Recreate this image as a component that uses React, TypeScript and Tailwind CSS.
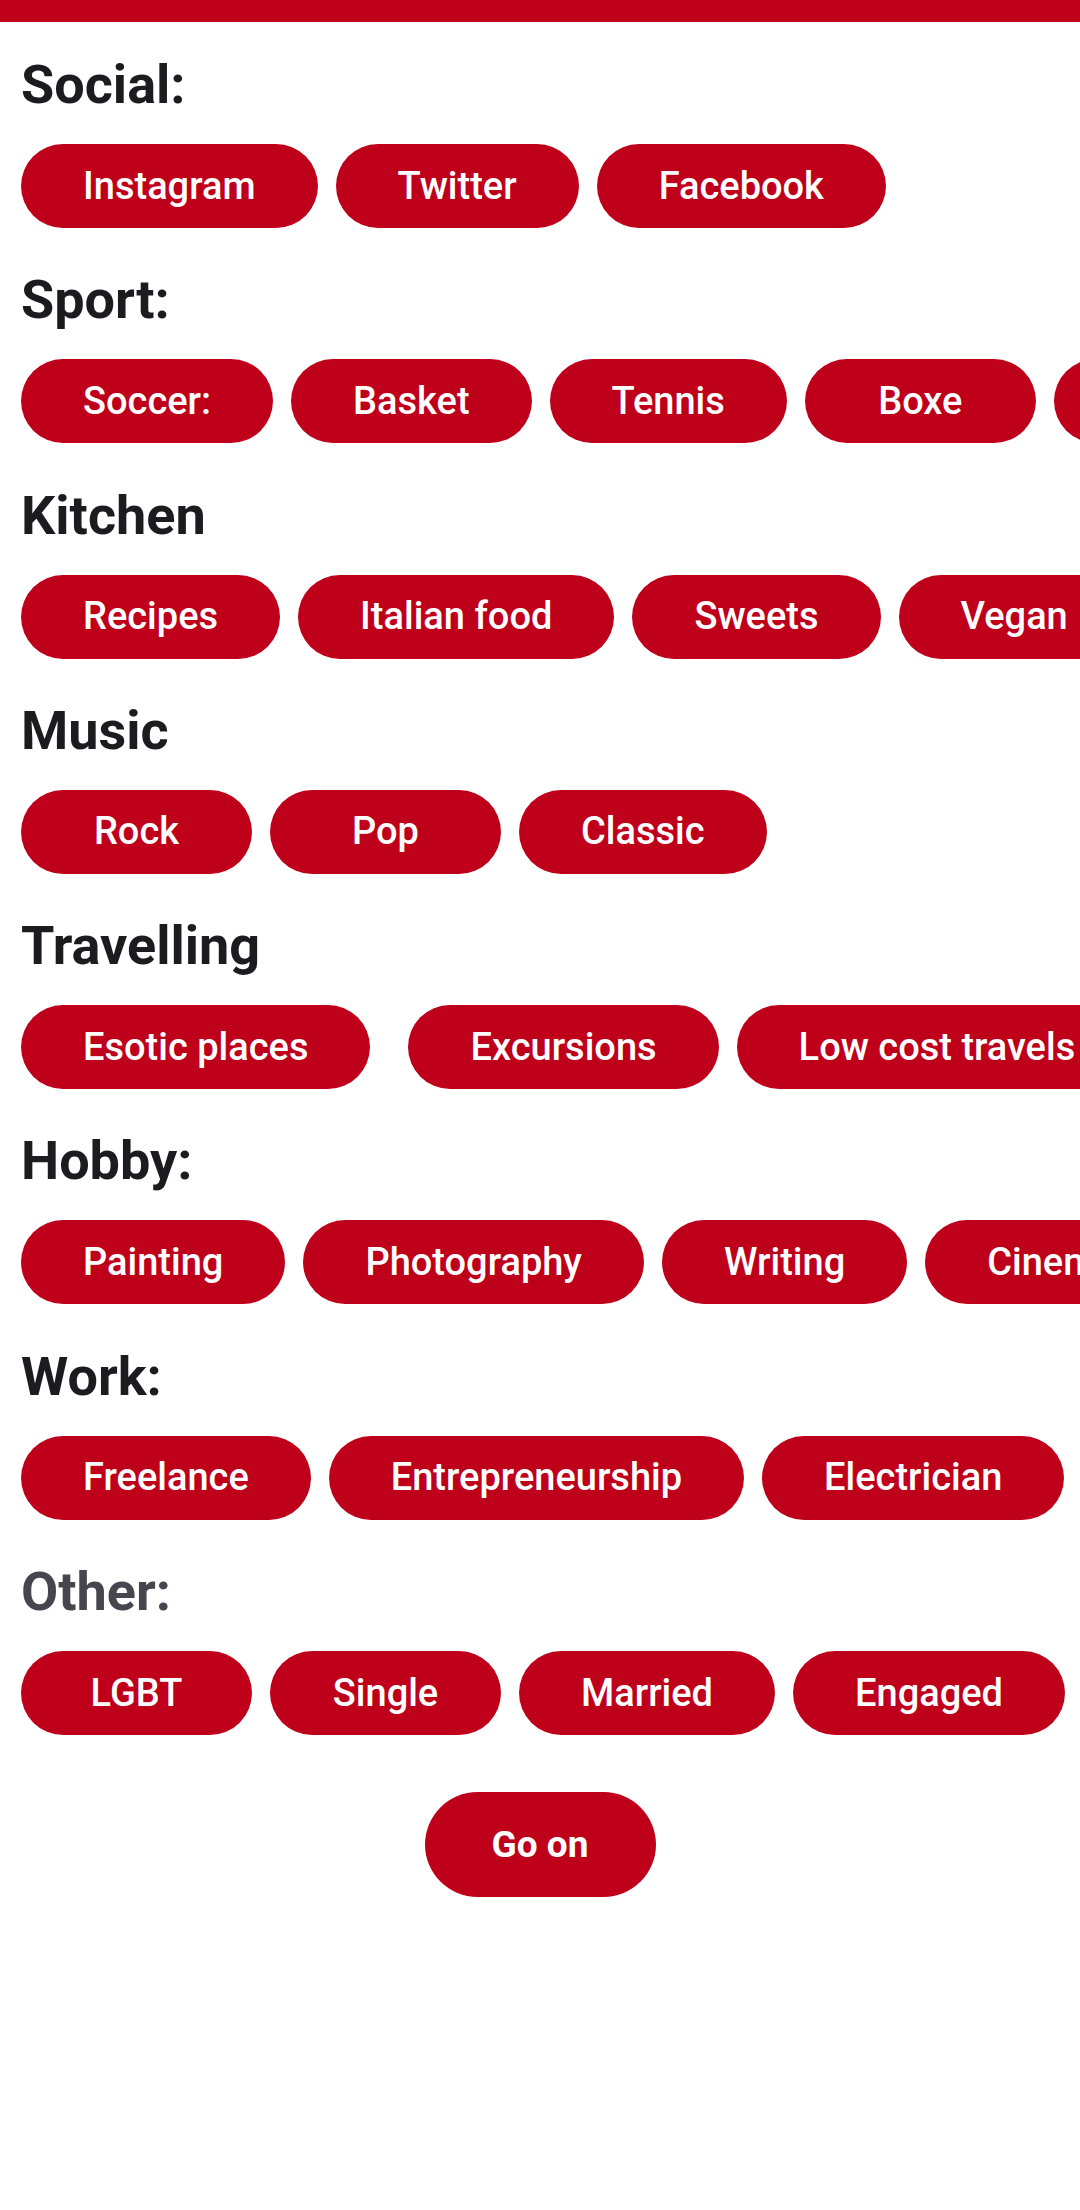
import React from "react";

type Section = {
  title: string;
  muted?: boolean;
  items: { label: string; extraGap?: boolean }[];
};

const sections: Section[] = [
  { title: "Social:", items: [{ label: "Instagram" }, { label: "Twitter" }, { label: "Facebook" }] },
  {
    title: "Sport:",
    items: [{ label: "Soccer:" }, { label: "Basket" }, { label: "Tennis" }, { label: "Boxe" }, { label: "Volley" }],
  },
  {
    title: "Kitchen",
    items: [{ label: "Recipes" }, { label: "Italian food" }, { label: "Sweets" }, { label: "Vegan" }],
  },
  { title: "Music", items: [{ label: "Rock" }, { label: "Pop" }, { label: "Classic" }] },
  {
    title: "Travelling",
    items: [{ label: "Esotic places", extraGap: true }, { label: "Excursions" }, { label: "Low cost travels" }],
  },
  {
    title: "Hobby:",
    items: [{ label: "Painting" }, { label: "Photography" }, { label: "Writing" }, { label: "Cinema" }],
  },
  {
    title: "Work:",
    items: [{ label: "Freelance" }, { label: "Entrepreneurship" }, { label: "Electrician" }],
  },
  {
    title: "Other:",
    muted: true,
    items: [{ label: "LGBT" }, { label: "Single" }, { label: "Married" }, { label: "Engaged" }],
  },
];

function Chip({ label, extraGap }: { label: string; extraGap?: boolean }) {
  return (
    <button
      type="button"
      className={`flex h-[84px] min-w-[231px] shrink-0 items-center justify-center whitespace-nowrap rounded-full bg-[#bf001b] px-[62px] text-[38px] font-medium text-white ${
        extraGap ? "mr-[20px]" : ""
      }`}
    >
      {label}
    </button>
  );
}

export default function App() {
  return (
    <div className="w-[1080px] overflow-hidden bg-white font-['Roboto',sans-serif]">
      <div className="h-[22px] bg-[#bf001b]" />
      <div className="flex flex-col gap-[39.3px] px-[21px] pt-[30px]">
        {sections.map((section) => (
          <div key={section.title} className="flex flex-col">
            <h2
              className={`text-[54px] font-bold leading-[65px] ${
                section.muted ? "text-[#49454f]" : "text-[#1c1b1f]"
              }`}
            >
              {section.title}
            </h2>
            <div className="mt-[27px] flex flex-nowrap gap-[18px]">
              {section.items.map((item) => (
                <Chip key={item.label} label={item.label} extraGap={item.extraGap} />
              ))}
            </div>
          </div>
        ))}
      </div>
      <div className="flex justify-center pt-[57px] pb-[312px]">
        <button
          type="button"
          className="flex h-[105px] w-[231px] items-center justify-center rounded-full bg-[#bf001b] text-[37px] font-bold text-white"
        >
          Go on
        </button>
      </div>
    </div>
  );
}
